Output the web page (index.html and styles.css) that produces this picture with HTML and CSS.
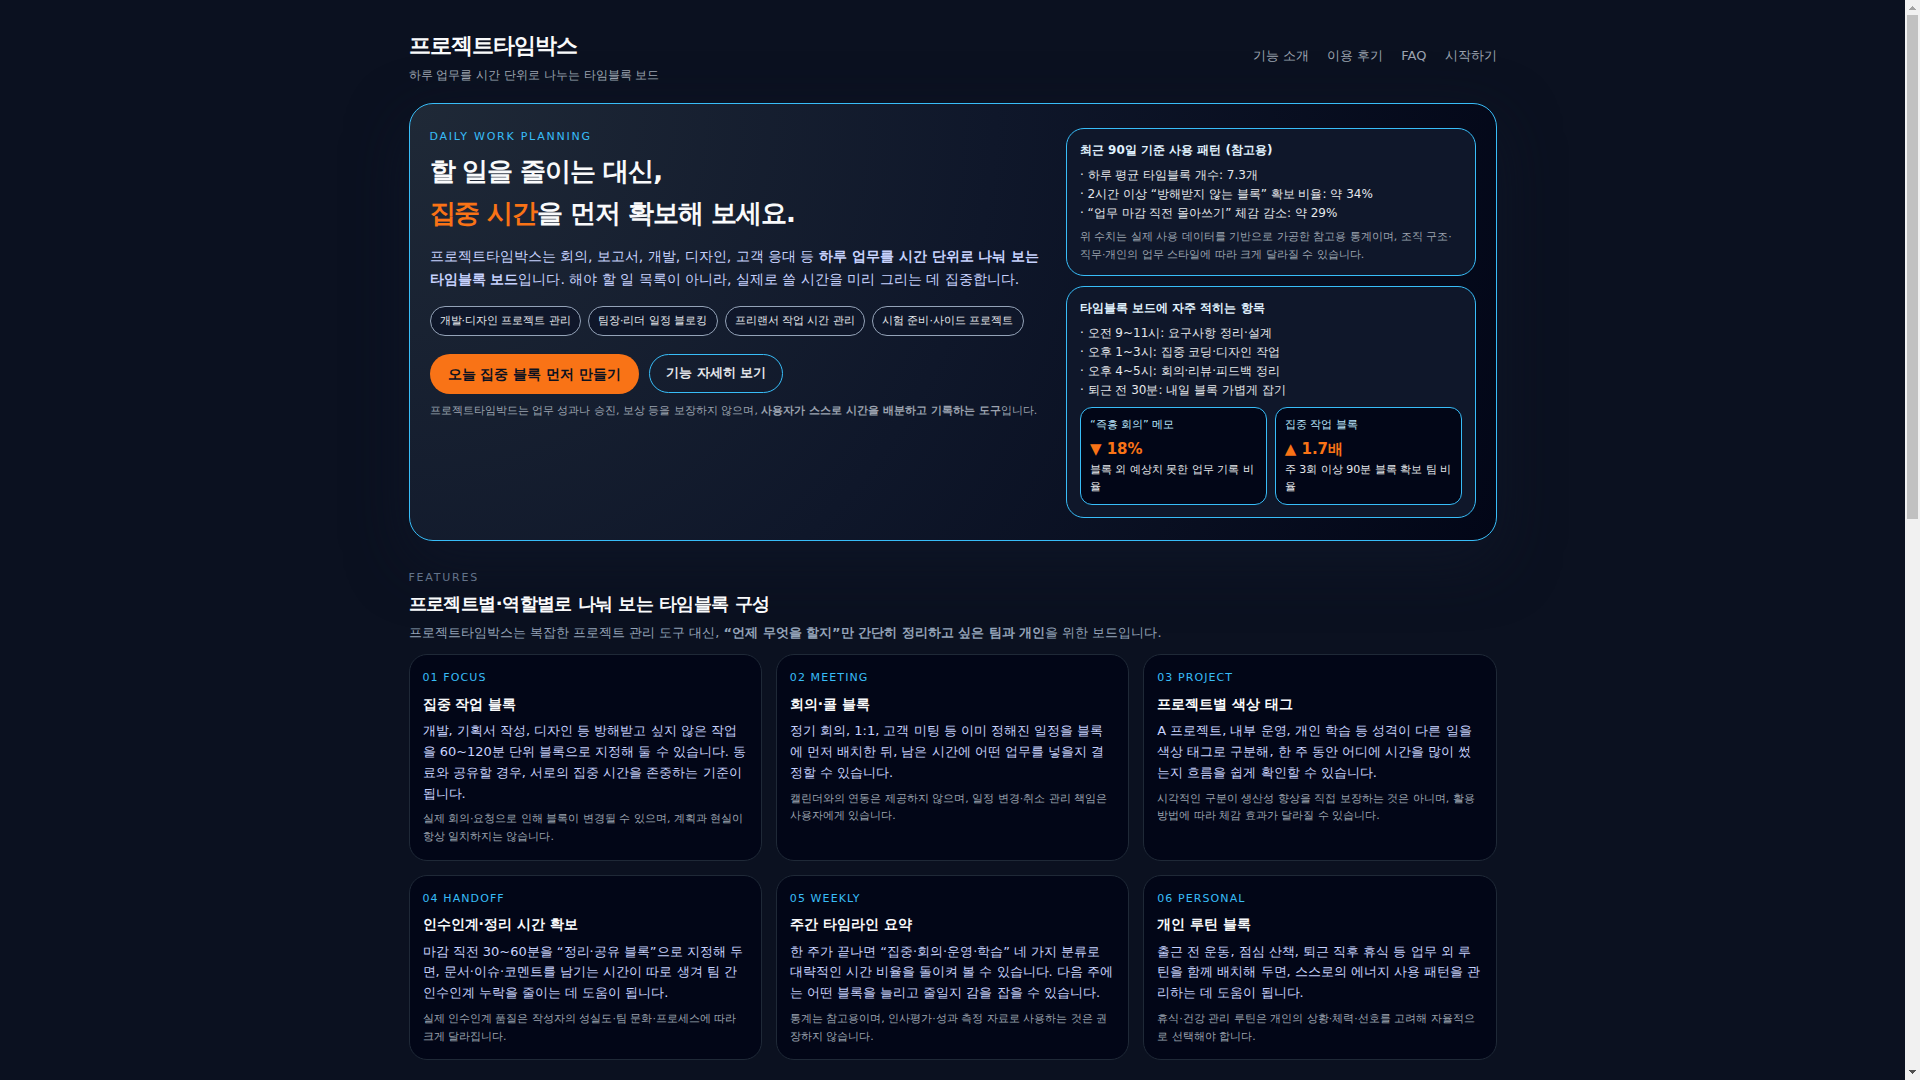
FILE: index.html
```html
<!DOCTYPE html>
<html lang="ko">
<head>
<meta charset="utf-8">
<meta name="viewport" content="width=device-width, initial-scale=1">
<title>프로젝트타임박스</title>
<link rel="stylesheet" href="styles.css">
</head>
<body>
<div class="page">
  <header class="site-header">
    <div>
      <h1 class="brand">프로젝트타임박스</h1>
      <p class="tagline">하루 업무를 시간 단위로 나누는 타임블록 보드</p>
    </div>
    <nav class="nav">
      <a href="#features">기능 소개</a>
      <a href="#reviews">이용 후기</a>
      <a href="#faq">FAQ</a>
      <a href="#start">시작하기</a>
    </nav>
  </header>

  <main>
    <section class="hero">
      <div class="hero-main">
        <p class="eyebrow">DAILY WORK PLANNING</p>
        <h2 class="hero-title">할 일을 줄이는 대신,<br><span class="accent">집중 시간</span>을 먼저 확보해 보세요.</h2>
        <p class="hero-text">프로젝트타임박스는 회의, 보고서, 개발, 디자인, 고객 응대 등 <strong>하루 업무를 시간 단위로 나눠 보는 타임블록 보드</strong>입니다. 해야 할 일 목록이 아니라, 실제로 쓸 시간을 미리 그리는 데 집중합니다.</p>
        <ul class="pills">
          <li>개발·디자인 프로젝트 관리</li>
          <li>팀장·리더 일정 블로킹</li>
          <li>프리랜서 작업 시간 관리</li>
          <li>시험 준비·사이드 프로젝트</li>
        </ul>
        <div class="actions">
          <button class="btn btn-primary" type="button">오늘 집중 블록 먼저 만들기</button>
          <button class="btn btn-outline" type="button">기능 자세히 보기</button>
        </div>
        <p class="note hero-note">프로젝트타임박드는 업무 성과나 승진, 보상 등을 보장하지 않으며, <strong>사용자가 스스로 시간을 배분하고 기록하는 도구</strong>입니다.</p>
      </div>

      <aside class="hero-side">
        <section class="panel">
          <h3 class="panel-title">최근 90일 기준 사용 패턴 (참고용)</h3>
          <ul class="panel-list">
            <li>· 하루 평균 타임블록 개수: 7.3개</li>
            <li>· 2시간 이상 “방해받지 않는 블록” 확보 비율: 약 34%</li>
            <li>· “업무 마감 직전 몰아쓰기” 체감 감소: 약 29%</li>
          </ul>
          <p class="note panel-note">위 수치는 실제 사용 데이터를 기반으로 가공한 참고용 통계이며, 조직 구조·직무·개인의 업무 스타일에 따라 크게 달라질 수 있습니다.</p>
        </section>
        <section class="panel">
          <h3 class="panel-title">타임블록 보드에 자주 적히는 항목</h3>
          <ul class="panel-list">
            <li>· 오전 9~11시: 요구사항 정리·설계</li>
            <li>· 오후 1~3시: 집중 코딩·디자인 작업</li>
            <li>· 오후 4~5시: 회의·리뷰·피드백 정리</li>
            <li>· 퇴근 전 30분: 내일 블록 가볍게 잡기</li>
          </ul>
          <div class="stats">
            <div class="stat">
              <p class="stat-label">“즉흥 회의” 메모</p>
              <p class="stat-value">▼ 18%</p>
              <p class="stat-text">블록 외 예상치 못한 업무 기록 비율</p>
            </div>
            <div class="stat">
              <p class="stat-label">집중 작업 블록</p>
              <p class="stat-value">▲ 1.7배</p>
              <p class="stat-text">주 3회 이상 90분 블록 확보 팀 비율</p>
            </div>
          </div>
        </section>
      </aside>
    </section>

    <section class="features" id="features">
      <p class="eyebrow eyebrow-muted">FEATURES</p>
      <h2 class="section-title">프로젝트별·역할별로 나눠 보는 타임블록 구성</h2>
      <p class="section-text">프로젝트타임박스는 복잡한 프로젝트 관리 도구 대신, <strong>“언제 무엇을 할지”만 간단히 정리하고 싶은 팀과 개인</strong>을 위한 보드입니다.</p>
      <div class="cards">
        <article class="card">
          <p class="card-tag">01 FOCUS</p>
          <h3 class="card-title">집중 작업 블록</h3>
          <p class="card-text">개발, 기획서 작성, 디자인 등 방해받고 싶지 않은 작업을 60~120분 단위 블록으로 지정해 둘 수 있습니다. 동료와 공유할 경우, 서로의 집중 시간을 존중하는 기준이 됩니다.</p>
          <p class="note card-note">실제 회의·요청으로 인해 블록이 변경될 수 있으며, 계획과 현실이 항상 일치하지는 않습니다.</p>
        </article>
        <article class="card">
          <p class="card-tag">02 MEETING</p>
          <h3 class="card-title">회의·콜 블록</h3>
          <p class="card-text">정기 회의, 1:1, 고객 미팅 등 이미 정해진 일정을 블록에 먼저 배치한 뒤, 남은 시간에 어떤 업무를 넣을지 결정할 수 있습니다.</p>
          <p class="note card-note">캘린더와의 연동은 제공하지 않으며, 일정 변경·취소 관리 책임은 사용자에게 있습니다.</p>
        </article>
        <article class="card">
          <p class="card-tag">03 PROJECT</p>
          <h3 class="card-title">프로젝트별 색상 태그</h3>
          <p class="card-text">A 프로젝트, 내부 운영, 개인 학습 등 성격이 다른 일을 색상 태그로 구분해, 한 주 동안 어디에 시간을 많이 썼는지 흐름을 쉽게 확인할 수 있습니다.</p>
          <p class="note card-note">시각적인 구분이 생산성 향상을 직접 보장하는 것은 아니며, 활용 방법에 따라 체감 효과가 달라질 수 있습니다.</p>
        </article>
        <article class="card">
          <p class="card-tag">04 HANDOFF</p>
          <h3 class="card-title">인수인계·정리 시간 확보</h3>
          <p class="card-text">마감 직전 30~60분을 “정리·공유 블록”으로 지정해 두면, 문서·이슈·코멘트를 남기는 시간이 따로 생겨 팀 간 인수인계 누락을 줄이는 데 도움이 됩니다.</p>
          <p class="note card-note">실제 인수인계 품질은 작성자의 성실도·팀 문화·프로세스에 따라 크게 달라집니다.</p>
        </article>
        <article class="card">
          <p class="card-tag">05 WEEKLY</p>
          <h3 class="card-title">주간 타임라인 요약</h3>
          <p class="card-text">한 주가 끝나면 “집중·회의·운영·학습” 네 가지 분류로 대략적인 시간 비율을 돌이켜 볼 수 있습니다. 다음 주에는 어떤 블록을 늘리고 줄일지 감을 잡을 수 있습니다.</p>
          <p class="note card-note">통계는 참고용이며, 인사평가·성과 측정 자료로 사용하는 것은 권장하지 않습니다.</p>
        </article>
        <article class="card">
          <p class="card-tag">06 PERSONAL</p>
          <h3 class="card-title">개인 루틴 블록</h3>
          <p class="card-text">출근 전 운동, 점심 산책, 퇴근 직후 휴식 등 업무 외 루틴을 함께 배치해 두면, 스스로의 에너지 사용 패턴을 관리하는 데 도움이 됩니다.</p>
          <p class="note card-note">휴식·건강 관리 루틴은 개인의 상황·체력·선호를 고려해 자율적으로 선택해야 합니다.</p>
        </article>
      </div>
    </section>
  </main>
</div>

<div class="scrollbar" aria-hidden="true">
  <svg class="scroll-arrow" viewBox="0 0 15 15" shape-rendering="crispEdges"><path d="M4 10h7V9h-1V8H9V7H8V6H7v1H6v1H5v1H4z" fill="#a3a3a3"/></svg>
  <div class="scroll-track"><div class="scroll-thumb"></div></div>
  <svg class="scroll-arrow" viewBox="0 0 15 15" shape-rendering="crispEdges"><path d="M4 5h7v1h-1v1H9v1H8v1H7V8H6V7H5V6H4z" fill="#505050"/></svg>
</div>
</body>
</html>
```

FILE: styles.css
```css
* {
  box-sizing: border-box;
  margin: 0;
  padding: 0;
}

body {
  padding-right: 15px;
  background: #0b1120;
  color: #f9fafb;
  font-family: "DejaVu Sans", sans-serif;
  font-size: 13px;
  line-height: 1.6;
}

ul {
  list-style: none;
}

.page {
  max-width: 1120px;
  margin: 0 auto;
  padding: 28px 16px 16px;
}

/* Header */
.site-header {
  display: flex;
  align-items: center;
  justify-content: space-between;
  gap: 16px;
  margin-bottom: 18px;
}

.brand {
  font-size: 22px;
  letter-spacing: -0.04em;
}

.tagline {
  margin-top: 3px;
  color: #9ca3af;
  font-size: 12px;
}

.nav {
  display: flex;
  flex-wrap: wrap;
  gap: 18px;
}

.nav a {
  color: #9ca3af;
  text-decoration: none;
}

/* Hero */
.hero {
  display: grid;
  grid-template-columns: 3fr 2fr;
  gap: 22px;
  padding: 24px 20px 22px;
  border: 1px solid #38bdf8;
  border-radius: 24px;
  background: radial-gradient(circle at top left, #1f2937 0%, #0f172a 50%, #020617 100%);
  box-shadow: 0 20px 60px rgba(15, 23, 42, 0.7);
}

.eyebrow {
  color: #38bdf8;
  font-size: 11px;
  letter-spacing: 0.16em;
}

.eyebrow-muted {
  color: #64748b;
}

.hero-title {
  margin-top: 5px;
  font-size: 26px;
  letter-spacing: -0.04em;
}

.accent {
  color: #f97316;
}

.hero-text {
  margin-top: 11px;
  color: #c7d2fe;
  font-size: 14px;
  line-height: 1.65;
}

.pills {
  display: flex;
  flex-wrap: wrap;
  gap: 7px;
  margin-top: 15px;
}

.pills li {
  padding: 5px 9px;
  border: 1px solid #94a3b8;
  border-radius: 999px;
  background: #0f172a;
  color: #e5e7eb;
  font-size: 11px;
}

.actions {
  display: flex;
  flex-wrap: wrap;
  align-items: flex-start;
  gap: 10px;
  margin-top: 18px;
}

.btn {
  border: 0;
  border-radius: 999px;
  font-family: inherit;
  font-weight: 700;
  line-height: 1.6;
  cursor: pointer;
}

.btn-primary {
  padding: 9px 18px;
  background: #f97316;
  color: #0b1120;
  font-size: 14px;
}

.btn-outline {
  padding: 8px 16px;
  border: 1px solid #38bdf8;
  background: transparent;
  color: #e5e7eb;
  font-size: 13px;
}

.note {
  color: #9ca3af;
  font-size: 11px;
}

.hero-note {
  margin-top: 8px;
}

.hero-side {
  display: flex;
  flex-direction: column;
  gap: 10px;
}

.panel {
  padding: 12px 13px;
  border: 1px solid #38bdf8;
  border-radius: 18px;
  background: #0f172a;
}

.panel-title {
  color: #e0f2fe;
  font-size: 12px;
}

.panel-list {
  margin-top: 5px;
  color: #e5e7eb;
  font-size: 12px;
}

.panel-note {
  margin-top: 5px;
}

.stats {
  display: grid;
  grid-template-columns: 1fr 1fr;
  gap: 8px;
  margin-top: 7px;
}

.stat {
  padding: 8px 9px;
  border: 1px solid #38bdf8;
  border-radius: 12px;
  background: #020617;
}

.stat-label {
  color: #bae6fd;
  font-size: 11px;
}

.stat-value {
  margin-top: 3px;
  color: #f97316;
  font-size: 15px;
  font-weight: 700;
}

.stat-text {
  color: #e5e7eb;
  font-size: 11px;
}

/* Features */
.features {
  margin-top: 28px;
}

.section-title {
  margin-top: 3px;
  font-size: 18px;
  letter-spacing: -0.03em;
}

.section-text {
  margin-top: 5px;
  color: #94a3b8;
}

.cards {
  display: grid;
  grid-template-columns: repeat(3, 1fr);
  gap: 14px;
  margin-top: 10px;
}

.card {
  padding: 14px 13px;
  border: 1px solid #1f2937;
  border-radius: 18px;
  background: #020617;
}

.card-tag {
  color: #38bdf8;
  font-size: 11px;
  letter-spacing: 0.1em;
}

.card-title {
  margin-top: 6px;
  font-size: 14px;
}

.card-text {
  margin-top: 6px;
  color: #c7d2fe;
}

.card-note {
  margin-top: 6px;
}

/* Scrollbar over the right edge of the window */
.scrollbar {
  position: fixed;
  top: 0;
  right: 0;
  bottom: 0;
  display: flex;
  flex-direction: column;
  width: 15px;
  background: #f1f1f1;
}

.scroll-arrow {
  display: block;
  width: 15px;
  height: 15px;
}

.scroll-track {
  flex: 1;
  padding: 0 2px;
}

.scroll-thumb {
  height: 48%;
  background: #c1c1c1;
}

@media (max-width: 900px) {
  .hero,
  .cards {
    grid-template-columns: 1fr;
  }
}
```
